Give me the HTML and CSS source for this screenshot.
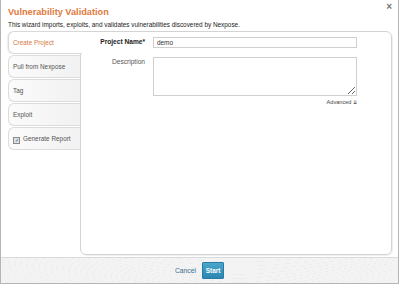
FILE: index.html
```html
<!DOCTYPE html>
<html lang="en">
<head>
    <meta charset="UTF-8">
    <title>Vulnerability Validation</title>
    <link rel="stylesheet" href="styles.css">
</head>
<body>
    <div class="dialog">
        <div class="head">
            <h1>Vulnerability Validation</h1>
            <span class="close">&times;</span>
        </div>
        <p class="intro">This wizard imports, exploits, and validates vulnerabilities discovered by Nexpose.</p>
        <div class="wizard">
            <ul class="tabs">
                <li class="tab active">Create Project</li>
                <li class="tab">Pull from Nexpose</li>
                <li class="tab">Tag</li>
                <li class="tab">Exploit</li>
                <li class="tab"><span class="check">&#10003;</span>Generate Report</li>
            </ul>
            <div class="panel">
                <div class="row">
                    <label class="req">Project Name*</label>
                    <input type="text" value="demo">
                </div>
                <div class="row">
                    <label>Description</label>
                    <textarea></textarea>
                </div>
                <div class="advanced">Advanced <span class="arrows">&#8650;</span></div>
            </div>
        </div>
        <div class="footer">
            <a class="cancel">Cancel</a>
            <button class="start">Start</button>
        </div>
    </div>
</body>
</html>
```
FILE: styles.css
```css
body {
    margin: 0;
    font-family: "Liberation Sans", Arial, sans-serif;
    background: #ffffff;
}
.dialog {
    width: 397px;
    height: 283px;
    border: 1px solid #b5b5b5;
    border-top: none;
    background: #fff;
    display: flex;
    flex-direction: column;
}
.head {
    display: flex;
    justify-content: space-between;
    padding: 6px 6px 0 7px;
    height: 12px;
}
h1 {
    margin: 0;
    font-size: 9.2px;
    font-weight: bold;
    color: #df7a3e;
    line-height: 13px;
}
.close {
    font-size: 10px;
    color: #777;
    line-height: 2px;
    font-weight: bold;
}
.intro {
    margin: 3px 0 0 7px;
    font-size: 6.4px;
    color: #222;
    line-height: 8px;
}
.wizard {
    display: flex;
    margin: 2px 6px 0 7px;
    height: 224px;
}
.tabs {
    list-style: none;
    margin: 0;
    padding: 0;
    width: 73px;
    display: flex;
    flex-direction: column;
    gap: 1px;
}
.tab {
    height: 21px;
    line-height: 21px;
    padding-left: 4px;
    font-size: 6.4px;
    color: #555;
    background: linear-gradient(to right, #fbfbfb, #f1f1f1);
    border: 1px solid #dcdcdc;
    border-right: none;
    border-radius: 6px 0 0 6px;
}
.tab.active {
    color: #d5793f;
    background: #fff;
    border-color: #d9d9d9;
    width: 69px;
    position: relative;
    z-index: 1;
    box-shadow: -1px 0 1px #eee;
}
.check {
    display: inline-block;
    width: 5px;
    height: 5px;
    border: 1px solid #8a8a8a;
    background: #dde3ea;
    font-size: 5px;
    line-height: 5px;
    text-align: center;
    color: #345;
    margin-right: 3px;
    vertical-align: -1px;
}
.panel {
    flex: 1;
    border: 1px solid #d3d3d3;
    border-radius: 0 6px 6px 6px;
    margin-left: -1px;
    padding: 5px 34px 0 0;
    box-shadow: 1px 1px 1px #eee;
}
.row {
    display: flex;
    margin-bottom: 9px;
}
label {
    width: 64px;
    text-align: right;
    padding-right: 8px;
    font-size: 6.6px;
    color: #555;
    line-height: 10px;
}
label.req {
    font-weight: bold;
    color: #222;
}
input, textarea {
    flex: 1;
    border: 1px solid #cfcfcf;
    font-family: inherit;
    font-size: 6.4px;
    color: #333;
    padding: 0 3px;
    margin: 0;
    box-sizing: border-box;
    outline: none;
}
input {
    height: 11px;
}
textarea {
    height: 39px;
    resize: both;
}
.advanced {
    text-align: right;
    font-size: 5.6px;
    color: #444;
    margin-top: -6px;
}
.arrows {
    font-size: 5px;
}
.footer {
    margin-top: auto;
    height: 25px;
    border-top: 1px solid #dadada;
    background: repeating-radial-gradient(ellipse at 60% 140%, #f3f3f3 0 8px, #ececec 8px 9px), #f1f1f1;
    display: flex;
    align-items: center;
    justify-content: center;
    gap: 6px;
}
.cancel {
    font-size: 6.8px;
    color: #3f6f8f;
}
.start {
    background: linear-gradient(#4ba6cc, #2b86b1);
    border: 1px solid #2a7aa3;
    color: #fff;
    font-family: inherit;
    font-size: 6.4px;
    font-weight: bold;
    padding: 0;
    width: 22px;
    height: 17px;
    border-radius: 1px;
}
```
